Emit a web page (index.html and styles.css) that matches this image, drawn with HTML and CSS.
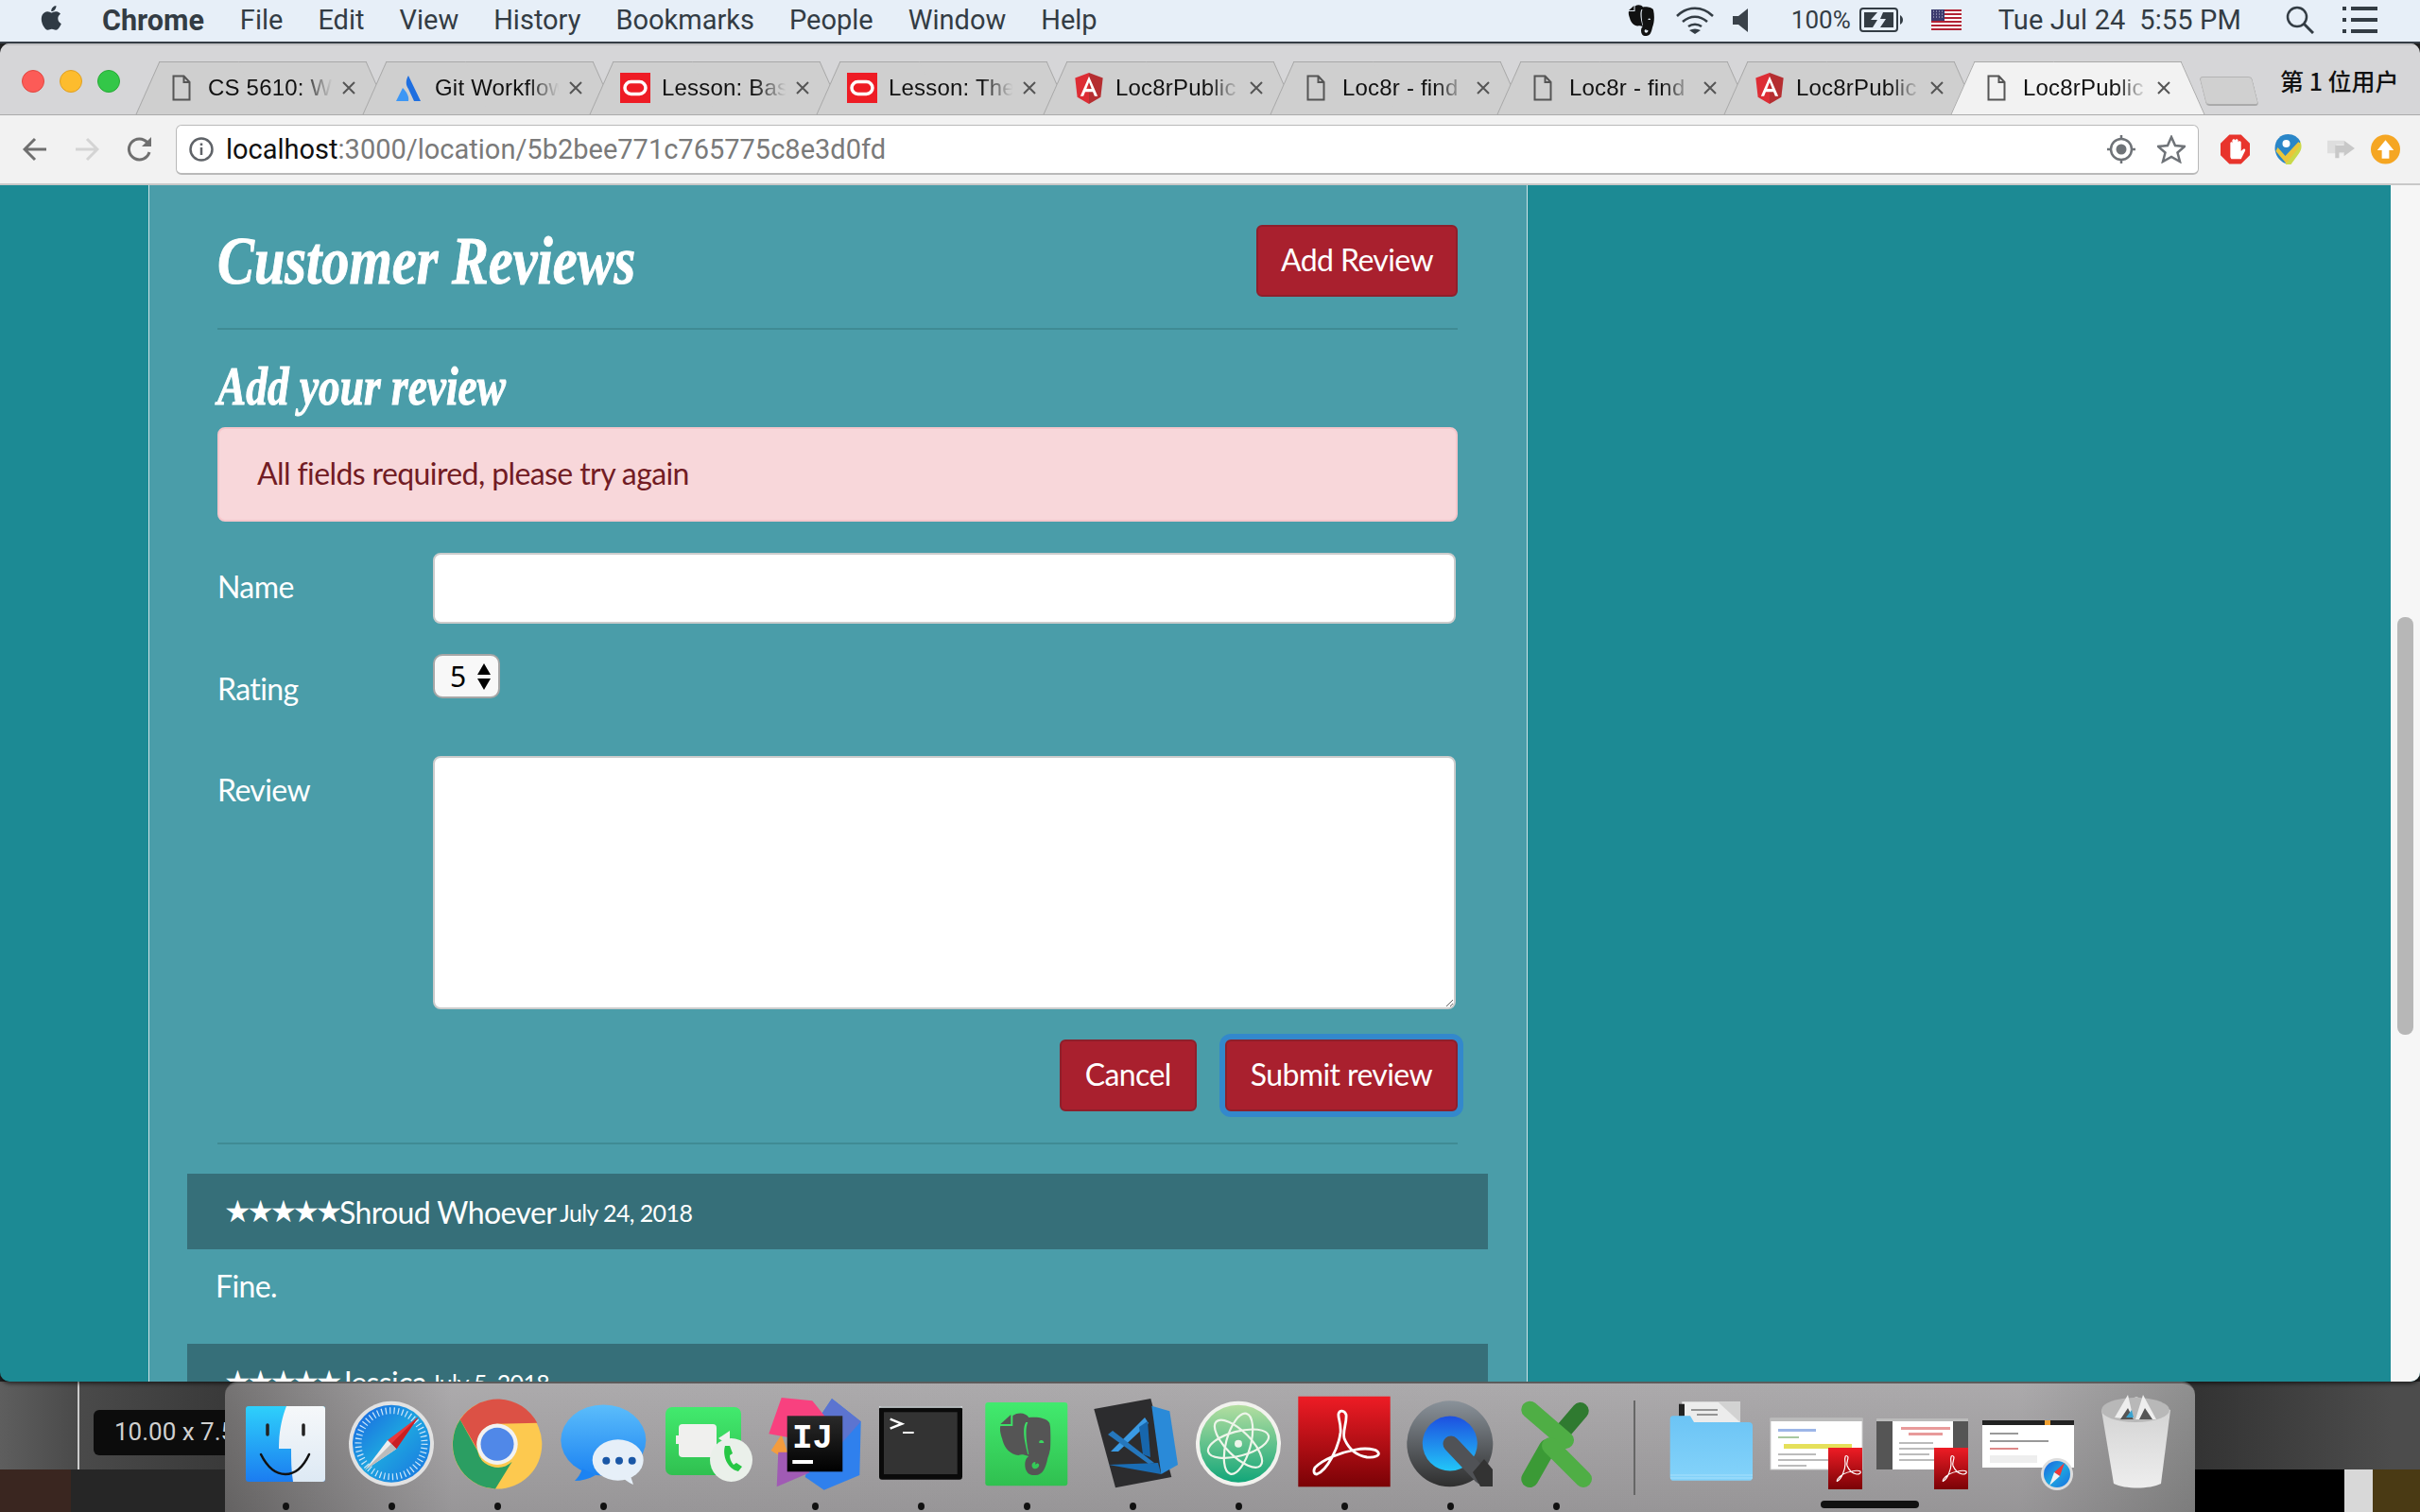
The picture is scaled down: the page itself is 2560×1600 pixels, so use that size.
FILE: index.html
```html
<!DOCTYPE html>
<html lang="en">
    <head>
        <meta charset="UTF-8" />
        <title>Loc8rPublic</title>
        <link rel="stylesheet" href="styles.css">
    </head>
    <body>
        <svg class="defs" width="0" height="0">
            <defs>
                <symbol id="doc" viewBox="0 0 20 28"><path d="M1.5 1.5h11l6 6.500v18.500h-17z M12.500 1.500v6.500h6" fill="#fff" fill-opacity="0" stroke="#555" stroke-width="2"/></symbol>
                <symbol id="oracle" viewBox="0 0 32 32"><rect width="32" height="32" fill="#ee1c25"/><rect x="5" y="9.500" width="22" height="13" rx="6.500" fill="none" stroke="#fff" stroke-width="3.500"/></symbol>
                <symbol id="angular" viewBox="0 0 32 36"><path d="M16 0L0 6l2.500 22L16 36z" fill="#dd2d35"/><path d="M16 0l16 6-2.500 22L16 36z" fill="#b52e31"/><path d="M16 4L6 27h3.600l2-5h8.800l2 5H26zM13 18.500l3-7.500 3 7.500z" fill="#fff"/></symbol>
                <symbol id="atlassian" viewBox="0 0 26 27"><path d="M13 0c-3 5-3 10 0 14l6 13h7z" fill="#1f6fe0"/><path d="M7 13L0 27h13c1-5-2-10-6-14z" fill="#3d97f5"/></symbol>
                <symbol id="close" viewBox="0 0 14 14"><path d="M1 1l12 12M13 1L1 13" stroke="#555" stroke-width="2" fill="none"/></symbol>
                <symbol id="elephant" viewBox="0 0 54 66"><path fill-rule="evenodd" d="M14 3C20-1 28 0 31 5c8-1 19 0 22 6 3 13 2 27-2 37-2 10-5 18-13 18-7 1-11-4-11-11 0-5 2-8 4-9-6-2-8-2-11-1-8-1-15-7-17-17-2-6-3-10-2-14h13zM38 52c-4 0-5 5-2 7 3 1 6-1 6-4-1-2-2-2-4 0zM42 30c2-2 5-1 5 2h-5zM28 10c-4 6-2 20 2 34h1c-3-14-4-28-1-34z"/><path d="M1 12L12 2v10z"/></symbol>
                <linearGradient id="g-finder" x1="0" y1="0" x2="0" y2="1"><stop offset="0" stop-color="#2ed0fb"/><stop offset="1" stop-color="#1b7cf0"/></linearGradient>
                <linearGradient id="g-finder2" x1="0" y1="0" x2="0" y2="1"><stop offset="0" stop-color="#f6f8fa"/><stop offset="1" stop-color="#dde9f4"/></linearGradient>
                <linearGradient id="g-acro" x1="0" y1="0" x2="0" y2="1"><stop offset="0" stop-color="#ee1c25"/><stop offset="1" stop-color="#7a0206"/></linearGradient>
                <linearGradient id="g-blue" x1="0" y1="0" x2="0" y2="1"><stop offset="0" stop-color="#5bbdfb"/><stop offset="1" stop-color="#1c83f2"/></linearGradient>
                <linearGradient id="g-safari" x1="0" y1="0" x2="1" y2="1"><stop offset="0" stop-color="#1a5fe0"/><stop offset=".5" stop-color="#1ea6e0"/><stop offset="1" stop-color="#1a70e0"/></linearGradient>
                <linearGradient id="g-green" x1="0" y1="0" x2="0" y2="1"><stop offset="0" stop-color="#42ea6e"/><stop offset="1" stop-color="#30c050"/></linearGradient>
                <linearGradient id="g-atom" x1="0" y1="0" x2="0" y2="1"><stop offset="0" stop-color="#b4dea0"/><stop offset="1" stop-color="#12a679"/></linearGradient>
                <linearGradient id="g-qt" x1="0" y1="0" x2="0" y2="1"><stop offset="0" stop-color="#1d4fe0"/><stop offset="1" stop-color="#22c6f8"/></linearGradient>
                <linearGradient id="g-qtring" x1="0" y1="0" x2="0" y2="1"><stop offset="0" stop-color="#8a929a"/><stop offset="1" stop-color="#2e2e2e"/></linearGradient>
                <linearGradient id="g-folder" x1="0" y1="0" x2="0" y2="1"><stop offset="0" stop-color="#6cc4f5"/><stop offset="1" stop-color="#84d3fa"/></linearGradient>
                <linearGradient id="g-trash" x1="0" y1="0" x2="0" y2="1"><stop offset="0" stop-color="#cfcfcf"/><stop offset="1" stop-color="#eeeeee"/></linearGradient>
                <linearGradient id="g-ij" x1="0" y1="0" x2="0" y2="1"><stop offset="0" stop-color="#2a2a2a"/><stop offset="1" stop-color="#000"/></linearGradient>
                <symbol id="acro-mini" viewBox="0 0 36 44"><rect width="36" height="44" fill="url(#g-acro)"/><path d="M10 35c4-2 8-12 8-18 0-3-1-5 0-7 0-2 2-2 3 0 0 3-2 6-1 9 2 5 5 8 10 9 3 0 5-1 4-3-1-1-6-1-9 0-6 1-12 4-15 8-1 2-1 3 0 2z" fill="none" stroke="#fff" stroke-width="1.200"/></symbol>
            </defs>
        </svg>

        <header class="menubar">
            <div class="menu-left">
                <svg class="apple" viewBox="0 0 24 24"><path fill="#2f3a44" d="M17.05 12.54c-.03-2.6 2.12-3.85 2.22-3.91-1.21-1.77-3.09-2.01-3.76-2.04-1.6-.16-3.12.94-3.93.94-.81 0-2.07-.92-3.4-.89-1.75.03-3.36 1.02-4.26 2.58-1.82 3.15-.47 7.82 1.3 10.38.87 1.25 1.9 2.65 3.26 2.6 1.31-.05 1.8-.85 3.38-.85 1.58 0 2.02.85 3.4.82 1.4-.02 2.29-1.27 3.15-2.53.99-1.45 1.4-2.85 1.43-2.93-.03-.01-2.74-1.05-2.79-4.17zM14.46 4.9c.72-.87 1.2-2.08 1.07-3.29-1.03.04-2.29.69-3.03 1.56-.67.77-1.25 2-1.09 3.18 1.15.09 2.33-.58 3.05-1.45z"/></svg>
                <span class="menu-app">Chrome</span>
                <span>File</span>
                <span>Edit</span>
                <span>View</span>
                <span>History</span>
                <span>Bookmarks</span>
                <span>People</span>
                <span>Window</span>
                <span>Help</span>
            </div>
            <div class="menu-right">
                <svg class="st-ever"><use href="#elephant"/></svg>
                <svg class="st-wifi" viewBox="0 0 42 30"><path d="M2 11c11-11 27-11 38 0M8 17c8-7 18-7 26 0M14 22c4-3 10-3 14 0" fill="none" stroke="#333c44" stroke-width="2.500"/><path d="M15 26c4-2 8-2 12 0l-6 4z" fill="#333c44"/></svg>
                <svg class="st-vol" viewBox="0 0 16 25"><path d="M0 8h6L16 0v25L6 17H0z" fill="#3a424a"/></svg>
                <span class="st-pct">100%</span>
                <svg class="st-batt" viewBox="0 0 46 26"><rect x="1" y="1" width="39" height="24" rx="3" fill="none" stroke="#333c44" stroke-width="2"/><path d="M43 8c2 1 3 3 3 5s-1 4-3 5z" fill="#333c44"/><path d="M5 5h14l-7 8h7l-5 8H5zM25 5h11v16H22l6-9h-6z" fill="#333c44"/></svg>
                <svg class="st-flag" viewBox="0 0 32 22"><rect width="32" height="22" fill="#fff"/><path d="M0 0h32v2H0zM0 4h32v2H0zM0 8h32v2H0zM0 12h32v2H0zM0 16h32v2H0zM0 20h32v2H0z" fill="#b22234"/><rect width="14" height="12" fill="#3c3b6e"/><path d="M2 2h10M2 5h10M2 8h10" stroke="#ccd" stroke-dasharray="1 2"/></svg>
                <span class="st-date">Tue Jul 24&nbsp; 5:55 PM</span>
                <svg class="st-search" viewBox="0 0 30 30"><circle cx="12" cy="12" r="10" fill="none" stroke="#333c44" stroke-width="2.500"/><path d="M19 19l10 10" stroke="#333c44" stroke-width="3"/></svg>
                <svg class="st-list" viewBox="0 0 37 28"><path d="M0 2h4M9 2h28M0 14h4M9 14h28M0 26h4M9 26h28" stroke="#333c44" stroke-width="4"/></svg>
            </div>
        </header>

        <div class="browser">
            <div class="tabstrip">
                <div class="lights">
                    <span class="light light-red"></span>
                    <span class="light light-yellow"></span>
                    <span class="light light-green"></span>
                </div>
                <div class="tabs">
                    <div class="tab"><span class="fav"><svg class="fav-doc"><use href="#doc"/></svg></span><span class="tab-title">CS 5610: W</span><svg class="tab-x"><use href="#close"/></svg></div>
                    <div class="tab"><span class="fav"><svg class="fav-atl"><use href="#atlassian"/></svg></span><span class="tab-title">Git Workflow</span><svg class="tab-x"><use href="#close"/></svg></div>
                    <div class="tab"><span class="fav"><svg class="fav-full"><use href="#oracle"/></svg></span><span class="tab-title">Lesson: Bas</span><svg class="tab-x"><use href="#close"/></svg></div>
                    <div class="tab"><span class="fav"><svg class="fav-full"><use href="#oracle"/></svg></span><span class="tab-title">Lesson: The</span><svg class="tab-x"><use href="#close"/></svg></div>
                    <div class="tab"><span class="fav"><svg class="fav-ang"><use href="#angular"/></svg></span><span class="tab-title">Loc8rPublic</span><svg class="tab-x"><use href="#close"/></svg></div>
                    <div class="tab"><span class="fav"><svg class="fav-doc"><use href="#doc"/></svg></span><span class="tab-title">Loc8r - find</span><svg class="tab-x"><use href="#close"/></svg></div>
                    <div class="tab"><span class="fav"><svg class="fav-doc"><use href="#doc"/></svg></span><span class="tab-title">Loc8r - find</span><svg class="tab-x"><use href="#close"/></svg></div>
                    <div class="tab"><span class="fav"><svg class="fav-ang"><use href="#angular"/></svg></span><span class="tab-title">Loc8rPublic</span><svg class="tab-x"><use href="#close"/></svg></div>
                    <div class="tab tab-active"><span class="fav"><svg class="fav-doc"><use href="#doc"/></svg></span><span class="tab-title">Loc8rPublic</span><svg class="tab-x"><use href="#close"/></svg></div>
                    <div class="tab-new"></div>
                </div>
                <div class="profile">第 1 位用户</div>
            </div>

            <div class="toolbar">
                <svg class="nav-back" viewBox="0 0 26 26"><path d="M25 13H3M13 2L2 13l11 11" fill="none" stroke="#6f6f6f" stroke-width="3"/></svg>
                <svg class="nav-fwd" viewBox="0 0 26 26"><path d="M1 13h22M13 2l11 11-11 11" fill="none" stroke="#d4d4d4" stroke-width="3"/></svg>
                <svg class="nav-reload" viewBox="0 0 28 28"><path d="M24 17a11 11 0 1 1-2-10" fill="none" stroke="#6f6f6f" stroke-width="3"/><path d="M26 1v10H16z" fill="#6f6f6f"/></svg>
                <div class="omnibox">
                    <svg class="omni-info" viewBox="0 0 26 26"><circle cx="13" cy="13" r="11.500" fill="none" stroke="#5f6368" stroke-width="2.500"/><path d="M13 11v8M13 6.500v2.500" stroke="#5f6368" stroke-width="2.500"/></svg>
                    <span class="url"><span class="url-host">localhost</span>:3000/location/5b2bee771c765775c8e3d0fd</span>
                    <svg class="omni-target" viewBox="0 0 30 30"><circle cx="15" cy="15" r="11" fill="none" stroke="#6f7378" stroke-width="2.500"/><circle cx="15" cy="15" r="5.500" fill="#6f7378"/><path d="M15 0v4M15 26v4M0 15h4M26 15h4" stroke="#6f7378" stroke-width="2.500"/></svg>
                    <svg class="omni-star" viewBox="0 0 30 30"><path d="M15 2l4 9 10 1-7.500 6.500L24 28l-9-5-9 5 2.500-9.500L1 12l10-1z" fill="none" stroke="#6f7378" stroke-width="2.500"/></svg>
                </div>
                <div class="extensions">
                    <svg viewBox="0 0 30 30"><path d="M9 0h12l9 9v12l-9 9H9l-9-9V9z" fill="#e8342c"/><path d="M10 23V9c0-2 2-2 2 0V6c0-2 3-2 3 0 0-2 3-2 3 0v2c0-2 3-2 3 0v9l2-2c2-1 3 0 2 2l-4 8H11z" fill="#fff"/></svg>
                    <svg viewBox="0 0 30 32"><path d="M15 0a15 15 0 0 1 13 8L12 31C5 28 1 21 1 15 1 6 7 0 15 0z" fill="#2a86c8"/><path d="M28 8c2 5 1 9-2 13l-8 11h-6z" fill="#c9d94a"/><path d="M4 14l8 9L26 8l2 4-15 19L2 18z" fill="#e9c53a"/><circle cx="13" cy="10" r="4" fill="#fff"/></svg>
                    <svg viewBox="0 0 30 30"><path d="M1 6h17v4h-8v5h8v4H1z" fill="#dedede"/><path d="M18 11V6l11 8-11 8v-4h-5v6H9V11z" fill="#c8c8c8"/></svg>
                    <svg class="ext-up" viewBox="0 0 32 32"><circle cx="16" cy="16" r="16" fill="#f5a623"/><path d="M16 6l9 11h-5v9h-8v-9H7z" fill="#fff"/></svg>
                </div>
            </div>

            <div class="viewport">
                <main class="panel">
                    <div class="page-header">
                        <h2 class="script-head">Customer Reviews</h2>
                        <a class="btn">Add Review</a>
                    </div>
                    <hr class="rule">
                    <h4 class="script-sub">Add your review</h4>
                    <div class="alert">All fields required, please try again</div>
                    <form class="review-form">
                        <div class="form-row row-name">
                            <label>Name</label>
                            <input class="field" type="text">
                        </div>
                        <div class="form-row row-rating">
                            <label>Rating</label>
                            <div class="rating-select">
                                <span>5</span>
                                <svg viewBox="0 0 14 28"><path d="M7 0l7 12H0zM7 28L0 16h14z"/></svg>
                            </div>
                        </div>
                        <div class="form-row row-review">
                            <label>Review</label>
                            <textarea class="field field-area"></textarea>
                        </div>
                        <div class="form-actions">
                            <a class="btn">Cancel</a>
                            <a class="btn btn-focus">Submit review</a>
                        </div>
                    </form>
                    <hr class="rule rule-low">
                    <div class="review-head"><span class="stars">★★★★★</span><span class="review-name">Shroud Whoever</span> <small class="review-date">July 24, 2018</small></div>
                    <p class="review-body">Fine.</p>
                    <div class="review-head"><span class="stars">★★★★★</span><span class="review-name">Jessica</span> <small class="review-date">July 5, 2018</small></div>
                </main>
                <div class="scrollbar"><div class="scroll-thumb"></div></div>
            </div>
        </div>

        <div class="desktop">
            <div class="back-window">
                <div class="back-tool">
                    <div class="back-tip">10.00 x 7.50</div>
                </div>
            </div>
            <div class="wallpaper">
                <div class="wood"></div>
                <div class="wall-dark"></div>
                <div class="wall-black"></div>
                <div class="wall-light"></div>
                <div class="wood wood-r"></div>
            </div>
        </div>

        <nav class="dock">
            <div class="dock-item running">
                <svg viewBox="0 0 112 112"><rect x="14" y="16" width="84" height="80" rx="3" fill="url(#g-finder)"/><path d="M57 16h38a3 3 0 0 1 3 3v74a3 3 0 0 1-3 3H64c-2-12-2-24-2-35H49c0-18 3-32 8-45z" fill="url(#g-finder2)"/><path d="M37 36v10M75 36v10" stroke="#222" stroke-width="3.500" stroke-linecap="round"/><path d="M30 67c14 28 38 28 51 0" fill="none" stroke="#111" stroke-width="2.500" stroke-linecap="round"/></svg>
            </div>
            <div class="dock-item running">
                <svg viewBox="0 0 112 112"><circle cx="56" cy="55.700" r="45" fill="#e2e2e2"/><circle cx="56" cy="55.700" r="41" fill="url(#g-safari)"/><circle cx="56" cy="55.700" r="35" fill="none" stroke="#cfe8fa" stroke-width="7" stroke-dasharray="1.200 3.200"/><path d="M84.700 27.300L52 52l9.300 9.300z" fill="#e8383b"/><path d="M28 83.700L52 52l9.300 9.300z" fill="#ededed"/><path d="M84.700 27.300L56 55.700 61.300 61.300z" fill="#c81f22"/><path d="M28 83.700L56 55.700 61.300 61.300z" fill="#bbb"/></svg>
            </div>
            <div class="dock-item running">
                <svg viewBox="0 0 112 112"><circle cx="56" cy="56.300" r="47.300" fill="#fdc94f"/><path d="M16.700 30.300A47.300 47.300 0 0 1 98.300 33.700L56 34.700a22 22 0 0 0-21 27z" fill="#dc5145"/><path d="M16.700 30.300L35 63a22 22 0 0 0 36.700 11.700L54 103.500A47.300 47.300 0 0 1 16.700 30.300z" fill="#2b9e62"/><circle cx="56" cy="56.300" r="21.700" fill="#f2f2f2"/><circle cx="56" cy="56.300" r="17.500" fill="#5088e8"/></svg>
            </div>
            <div class="dock-item running">
                <svg viewBox="0 0 112 112"><ellipse cx="56.300" cy="52" rx="45" ry="37.500" fill="url(#g-blue)"/><path d="M34 82c-2 6-5 10-8 13 7 0 15-2 22-6z" fill="#1c83f2"/><ellipse cx="71.700" cy="73" rx="27" ry="21.700" fill="#e6eff8"/><path d="M78 93c4 3 7 5 10 6l-3-9z" fill="#e6eff8"/><g fill="#1a57a6"><circle cx="59.300" cy="73.700" r="4"/><circle cx="73" cy="73.700" r="4"/><circle cx="86.700" cy="73.700" r="4"/></g></svg>
            </div>
            <div class="dock-item">
                <svg viewBox="0 0 112 112"><rect x="10" y="17" width="80" height="72" rx="7" fill="url(#g-green)"/><rect x="24" y="35" width="40" height="35" rx="4" fill="#f0f0ee"/><rect x="21" y="47" width="4" height="9" fill="#f0f0ee"/><path d="M66 50l12-8v16z" fill="#f0f0ee"/><ellipse cx="79.500" cy="73" rx="22.500" ry="23" fill="#eaf0ea"/><path d="M73 58c-3 10 2 24 14 27l4-5-6-4-3 2c-3-3-4-7-4-10l3-2-3-8z" fill="#26c744"/></svg>
            </div>
            <div class="dock-item running">
                <svg viewBox="0 0 112 112"><path d="M74 8l30.700 24.300-1.400 56.700-37.600 15.700-20-13.700L64 23z" fill="#2f80ed"/><path d="M74 8l30.700 24.300L80 60 64 23z" fill="#5c74d0"/><path d="M9.700 63L20.700 46l10 30z" fill="#f39c3d"/><path d="M17.300 64.700l-1.600 36.600 35-15L30 64.700z" fill="#a05bb4"/><path d="M20.700 7l32.600 3.300L69 29.700 50 53 7.300 45.300z" fill="#f8417f"/><rect x="26.700" y="26.300" width="58.600" height="59" fill="url(#g-ij)"/><text x="32" y="60" class="ij-text">IJ</text><rect x="32.300" y="73" width="21.700" height="4" fill="#fff"/></svg>
            </div>
            <div class="dock-item running">
                <svg viewBox="0 0 112 112"><rect x="12" y="16.300" width="88" height="77.400" rx="3" fill="#0a0a0a"/><path d="M12 17h88" stroke="#dfe6e8" stroke-width="1.500"/><rect x="17" y="22.300" width="77.700" height="65.700" fill="#333"/><path d="M23.700 29.700l12.300 5-12.300 5" fill="none" stroke="#fff" stroke-width="2.500"/><rect x="37" y="43" width="11.700" height="2" fill="#fff"/></svg>
            </div>
            <div class="dock-item running">
                <svg viewBox="0 0 112 112"><rect x="12.300" y="12" width="87" height="88.300" rx="3" fill="url(#g-green)"/><svg x="27.300" y="23" width="54" height="66" fill="#555"><use href="#elephant"/></svg></svg>
            </div>
            <div class="dock-item running">
                <svg viewBox="0 0 112 112"><path d="M15.300 19L75.300 8l22 83-59.300 11.300z" fill="#2c2c2e"/><path d="M76.300 15.700l19 5.600L104 78 86.300 88z" fill="#2a8ad8"/><path d="M30.700 78l55.600 10L83 76z" fill="#1a6db5"/><path d="M69 28L33 64l8 0L73 34z" fill="#3a9ae4"/><path d="M30 46l5-4 44 34-6 1z" fill="#2577bd"/><path d="M63 38l9-6 3 38-8-3z" fill="#1766ac"/></svg>
            </div>
            <div class="dock-item running">
                <svg viewBox="0 0 112 112"><circle cx="56" cy="55.700" r="45" fill="#f2f2ee"/><circle cx="56" cy="55.700" r="41" fill="url(#g-atom)"/><g fill="none" stroke="#eef5ea" stroke-width="2.200"><ellipse cx="56" cy="55.700" rx="13" ry="33" transform="rotate(15 56 55.700)"/><ellipse cx="56" cy="55.700" rx="13" ry="33" transform="rotate(75 56 55.700)"/><ellipse cx="56" cy="55.700" rx="13" ry="33" transform="rotate(-45 56 55.700)"/></g><circle cx="56" cy="55.700" r="4" fill="#eef5ea"/></svg>
            </div>
            <div class="dock-item running">
                <svg viewBox="0 0 112 112"><rect x="7.300" y="5.700" width="97.400" height="95.600" fill="url(#g-acro)"/><path d="M27 88C38 84 50 60 52 44c1-10-3-16-2-20 1-4 6-4 8 1 1 9-4 17-2 25 4 10 12 18 24 20 8 1 14-2 12-5-2-4-14-5-24-3-16 3-34 10-43 19-2 4-1 7 2 7z" fill="none" stroke="#fff" stroke-width="2.800"/></svg>
            </div>
            <div class="dock-item running">
                <svg viewBox="0 0 112 112"><circle cx="55.800" cy="55.800" r="45.500" fill="url(#g-qtring)"/><circle cx="55.800" cy="55.500" r="29" fill="url(#g-qt)"/><path d="M57 56l32 34" stroke="#505256" stroke-width="17" stroke-linecap="round"/><path d="M80 86l12-14 9 11v18H88z" fill="#333"/></svg>
            </div>
            <div class="dock-item running">
                <svg viewBox="0 0 112 112"><path d="M81.700 21L62 44" stroke="#2f7a30" stroke-width="18" stroke-linecap="round"/><path d="M28.300 19.700L66 52" stroke="#4fae45" stroke-width="18" stroke-linecap="round"/><path d="M47 60L28.300 93" stroke="#3b9a36" stroke-width="18" stroke-linecap="round"/><path d="M50 58l35 35" stroke="#4fae45" stroke-width="18" stroke-linecap="round"/></svg>
            </div>
            <div class="dock-sep"></div>
            <div class="dock-item">
                <svg viewBox="0 0 112 112"><rect x="24.300" y="11.300" width="61.700" height="24" fill="#ececec"/><path d="M62 11.300h24v22z" fill="#d2d2d2"/><path d="M34 20h28M40 25h22" stroke="#777" stroke-width="1.500"/><rect x="21" y="13.700" width="6" height="13" fill="#222"/><path d="M11.700 30c0-2 1-3.700 3-3.700H33l4 6.700h58c2.500 0 4 1.500 4 4v54c0 2-1 3.700-3 3.700H14.700c-2 0-3-1.700-3-3.700z" fill="url(#g-folder)"/><path d="M12 89h87M12 92h87" stroke="#a8e0fb" stroke-width="1"/></svg>
            </div>
            <div class="dock-item dock-stack">
                <svg viewBox="0 0 112 112"><rect x="6" y="29" width="97" height="54" fill="#fff" stroke="#ccc"/><rect x="6" y="29" width="97" height="3" fill="#bbb"/><rect x="14" y="40" width="40" height="3" fill="#9db6e8"/><rect x="14" y="48" width="22" height="2" fill="#a8c8a0"/><rect x="20" y="56" width="72" height="5" fill="#e5e05a"/><rect x="14" y="66" width="40" height="2" fill="#bbb"/><rect x="14" y="72" width="56" height="2" fill="#bbb"/><rect x="14" y="78" width="30" height="2" fill="#bbb"/><svg x="67" y="60" width="36" height="44"><use href="#acro-mini"/></svg></svg>
            </div>
            <div class="dock-item dock-stack">
                <svg viewBox="0 0 112 112"><rect x="6" y="29" width="97" height="54" fill="#555"/><rect x="23" y="29" width="64" height="54" fill="#fff"/><rect x="6" y="29" width="97" height="3" fill="#bbb"/><rect x="32" y="38" width="52" height="3" fill="#e89a9a"/><rect x="40" y="44" width="36" height="3" fill="#e89a9a"/><rect x="30" y="54" width="36" height="2" fill="#bbb"/><rect x="30" y="60" width="50" height="2" fill="#bbb"/><rect x="30" y="66" width="32" height="2" fill="#bbb"/><rect x="30" y="72" width="44" height="2" fill="#bbb"/><svg x="67" y="60" width="36" height="44"><use href="#acro-mini"/></svg></svg>
            </div>
            <div class="dock-item dock-stack">
                <svg viewBox="0 0 112 112"><rect x="6" y="31" width="97" height="50" fill="#fff"/><rect x="6" y="31" width="97" height="5" fill="#222"/><rect x="72" y="31" width="6" height="5" fill="#f0a030"/><rect x="14" y="44" width="30" height="2" fill="#999"/><rect x="14" y="52" width="62" height="2" fill="#999"/><rect x="14" y="60" width="30" height="2" fill="#d88"/><rect x="14" y="68" width="50" height="8" fill="#eee"/><circle cx="85" cy="88" r="17" fill="#ddd"/><circle cx="85" cy="88" r="14" fill="url(#g-safari)"/><path d="M93 76l-11 10 6 4z" fill="#ee3a3a"/><path d="M77 100l11-10-6-4z" fill="#f2f2f2"/></svg>
            </div>
            <div class="dock-item">
                <svg viewBox="0 0 112 112"><path d="M20 20l37-14 36 14-10 78c-12 6-38 6-50 0z" fill="url(#g-trash)"/><ellipse cx="56" cy="20" rx="36" ry="13" fill="#b8b8b8"/><path d="M34 28l14-24 6 26zM56 30l8-26 14 26z" fill="#eee"/><path d="M40 30l8-12 6 12zM60 30l6-12 8 12z" fill="#555"/><path d="M46 28l6-8 2 8z" fill="#3aa3d0"/></svg>
            </div>
            <div class="stack-pill"></div>
        </nav>
    </body>
</html>
```

FILE: styles.css
```css
* {
    box-sizing: border-box;
}
html,
body {
    margin: 0;
    padding: 0;
}
body {
    position: relative;
    width: 2560px;
    height: 1600px;
    overflow: hidden;
    display: flex;
    flex-direction: column;
    font-family: "Lato", "Noto Sans", sans-serif;
    background-color: #222;
}
.defs {
    position: absolute;
}

/* mac menu bar */
.menubar {
    height: 46px;
    flex: none;
    display: flex;
    justify-content: space-between;
    align-items: center;
    padding: 0 45px 2px 43px;
    background-color: #e7eff8;
    border-bottom: 2px solid #39414a;
    font-family: "Roboto", sans-serif;
    font-size: 29px;
    color: #333c44;
}
.menu-left,
.menu-right {
    display: flex;
    align-items: center;
}
.menu-left span {
    margin-right: 37px;
}
.apple {
    width: 30px;
    height: 34px;
    margin: -4px 38px 0 -3px;
}
.menu-left .menu-app {
    font-size: 30.500px;
    font-weight: 700;
    margin-right: 38px;
}
.st-ever {
    width: 30px;
    height: 33px;
    fill: #111;
    margin-right: 21px;
}
.st-wifi {
    width: 42px;
    height: 30px;
    margin-right: 19px;
}
.st-vol {
    width: 16px;
    height: 25px;
    margin-right: 46px;
}
.st-pct {
    font-size: 26px;
    margin-right: 9px;
}
.st-batt {
    width: 46px;
    height: 26px;
    margin-right: 30px;
}
.st-flag {
    width: 32px;
    height: 22px;
    margin-right: 39px;
}
.st-date {
    letter-spacing: 0.15px;
    margin-right: 47px;
}
.st-search {
    width: 30px;
    height: 30px;
    margin-right: 30px;
}
.st-list {
    width: 37px;
    height: 28px;
}

/* browser window */
.browser {
    height: 1416px;
    flex: none;
    display: flex;
    flex-direction: column;
    border-radius: 10px;
    overflow: hidden;
    box-shadow: 0 2px 4px rgba(0, 0, 0, 0.6);
    position: relative;
    z-index: 1;
}
.tabstrip {
    height: 75px;
    flex: none;
    display: flex;
    background-color: #d6d6d8;
    border-top: 2px solid #c2c2c4;
    position: relative;
}
.lights {
    width: 144px;
    flex: none;
    display: flex;
    gap: 16px;
    padding: 26px 0 0 23px;
}
.light {
    width: 24px;
    height: 24px;
    border-radius: 50%;
}
.light-red {
    background-color: #fc5b57;
    border: 1px solid #e2463f;
}
.light-yellow {
    background-color: #fdbc2e;
    border: 1px solid #dfa023;
}
.light-green {
    background-color: #33c748;
    border: 1px solid #27aa35;
}
.tabs {
    display: flex;
    align-items: flex-end;
    height: 73px;
    isolation: isolate;
}
.tab {
    width: 268px;
    height: 56px;
    margin-right: -28px;
    flex: none;
    display: flex;
    align-items: center;
    padding-left: 32px;
    position: relative;
    font-family: "Liberation Sans", sans-serif;
    font-size: 24px;
    letter-spacing: 0.2px;
    color: #111;
}
.tab::before,
.tab::after {
    content: "";
    position: absolute;
    top: 0;
    bottom: 0;
    width: 50%;
    background-color: #cfcfcf;
    border-top: 1px solid #a8a8a8;
    z-index: -1;
}
.tab::before {
    left: 12px;
    border-left: 1px solid #a8a8a8;
    transform: skewX(-24deg);
}
.tab::after {
    right: 12px;
    border-right: 1px solid #a8a8a8;
    transform: skewX(24deg);
}
.tab-active {
    z-index: 2;
}
.tab-active::before,
.tab-active::after {
    background-color: #f2f2f2;
}
.fav {
    width: 32px;
    height: 36px;
    flex: none;
    display: flex;
    justify-content: center;
    align-items: center;
}
.fav-doc {
    width: 20px;
    height: 28px;
}
.fav-atl {
    width: 26px;
    height: 27px;
}
.fav-full {
    width: 32px;
    height: 32px;
}
.fav-ang {
    width: 30px;
    height: 33px;
}
.tab-title {
    width: 140px;
    margin-left: 12px;
    white-space: nowrap;
    overflow: hidden;
    -webkit-mask-image: linear-gradient(to right, #000 70%, transparent 94%);
    mask-image: linear-gradient(to right, #000 70%, transparent 94%);
}
.tab-x {
    width: 14px;
    height: 14px;
    margin-left: 2px;
}
.tab-new {
    width: 56px;
    height: 31px;
    margin: 0 0 9px 26px;
    background-color: #d0d0d0;
    border: 1px solid #b4b4b4;
    border-bottom: 2px solid #aaa;
    border-radius: 4px;
    transform: skewX(14deg);
    flex: none;
}
.profile {
    position: absolute;
    left: 2412px;
    top: 21px;
    font-family: "Noto Sans CJK SC", sans-serif;
    font-size: 25px;
    font-weight: 500;
    line-height: 32px;
    color: #111;
}

.toolbar {
    height: 75px;
    flex: none;
    display: flex;
    align-items: center;
    padding: 0 20px 0 24px;
    background-color: #f2f2f2;
    border-top: 1px solid #aaa;
    border-bottom: 2px solid #c8c8c8;
}
.toolbar svg {
    flex: none;
}
.nav-back {
    width: 26px;
    height: 26px;
    margin-right: 29px;
}
.nav-fwd {
    width: 26px;
    height: 26px;
    margin-right: 29px;
}
.nav-reload {
    width: 28px;
    height: 28px;
    margin-right: 24px;
}
.omnibox {
    width: 2140px;
    height: 53px;
    flex: none;
    display: flex;
    align-items: center;
    padding: 0 13px;
    background-color: #fff;
    border: 1px solid #b9b9b9;
    border-bottom-width: 2px;
    border-radius: 6px;
}
.omni-info {
    width: 26px;
    height: 26px;
    margin-right: 13px;
}
.url {
    font-family: "Roboto", sans-serif;
    font-size: 29px;
    color: #7a7a7a;
    flex: 1;
}
.url-host {
    color: #111;
}
.omni-target {
    width: 30px;
    height: 30px;
    margin-right: 23px;
}
.omni-star {
    width: 30px;
    height: 30px;
}
.extensions {
    display: flex;
    align-items: center;
    gap: 25px;
    margin-left: 23px;
}
.extensions svg {
    width: 31px;
    height: 32px;
}
.extensions .ext-up {
    margin-left: -9px;
}

/* page */
.viewport {
    flex: 1;
    min-height: 0;
    display: flex;
    justify-content: space-between;
    overflow: hidden;
    background-color: #1c8a94;
}
.panel {
    width: 1459px;
    margin-left: 157px;
    flex: none;
    padding: 42px 73px 0 72px;
    background-color: #4a9da9;
    border-left: 1px solid #cfe3e6;
    border-right: 1px solid #cfe3e6;
    color: #fff;
    font-size: 32px;
    letter-spacing: -0.6px;
}
.page-header {
    display: flex;
    justify-content: space-between;
    align-items: center;
}
.script-head,
.script-sub {
    margin: 0;
    font-family: "Liberation Serif", serif;
    font-style: italic;
    font-weight: 700;
    letter-spacing: 0;
    transform-origin: left center;
    -webkit-text-stroke: 1px #fff;
}
.script-head {
    font-size: 72px;
    line-height: 76px;
    transform: scaleX(0.81);
}
.script-sub {
    font-size: 56px;
    line-height: 64px;
    margin-top: 28px;
    transform: scaleX(0.81);
}
.btn {
    display: inline-block;
    height: 76px;
    padding: 0 24px;
    line-height: 70px;
    background-color: #a9202e;
    border: 2px solid #8e1f2b;
    border-radius: 6px;
    color: #fff;
    font-size: 32px;
    white-space: nowrap;
}
.btn-focus {
    box-shadow: 0 0 0 6px #3388cc;
}
.rule {
    height: 2px;
    margin: 33px 0 0;
    border: 0;
    background-color: #3f8b94;
}
.alert {
    height: 100px;
    margin-top: 11px;
    padding-left: 40px;
    line-height: 94px;
    background-color: #f8d7da;
    border: 2px solid #f5c6cb;
    border-radius: 8px;
    color: #721c24;
}
.form-row {
    display: flex;
}
.form-row label {
    width: 228px;
    flex: none;
}
.row-name {
    margin-top: 33px;
    height: 75px;
    align-items: center;
}
.row-name label {
    padding-bottom: 4px;
}
.field {
    flex: 1;
    display: block;
    margin-right: 2px;
    background-color: #fff;
    border: 2px solid #ccc;
    border-radius: 8px;
    outline: 0;
}
.row-name .field {
    height: 75px;
}
.row-rating {
    margin-top: 32px;
    margin-bottom: 32px;
    height: 76px;
}
.row-rating label {
    padding-top: 17px;
}
.rating-select {
    width: 71px;
    height: 47px;
    display: flex;
    align-items: center;
    justify-content: space-between;
    padding: 0 8px 0 16px;
    background-color: #f8f8f8;
    border: 2px solid #a6a6a6;
    border-radius: 10px;
    color: #000;
    font-family: "Noto Sans", sans-serif;
    font-size: 30px;
}
.rating-select svg {
    width: 14px;
    height: 28px;
}
.row-review {
    height: 268px;
}
.row-review label {
    padding-top: 16px;
}
.field-area {
    height: 268px;
    resize: both;
}
.form-actions {
    display: flex;
    justify-content: flex-end;
    gap: 30px;
    margin-top: 32px;
}
.form-actions .btn {
    padding: 0 25px;
}
.review-head {
    height: 80px;
    margin: 31px -32px 0;
    padding-left: 40px;
    display: flex;
    align-items: center;
    background-color: #366f79;
    white-space: pre;
}
.stars {
    font-family: "DejaVu Sans", sans-serif;
    font-size: 32px;
    letter-spacing: -4.500px;
    margin-left: -1px;
    margin-right: 1px;
}
.review-date {
    font-size: 25px;
    margin-left: 4px;
    padding-top: 2px;
}
.review-body {
    height: 100px;
    margin: 0 0 0 -2px;
    line-height: 78px;
}
.review-body + .review-head {
    margin-top: 0;
}
.scrollbar {
    width: 31px;
    flex: none;
    padding: 457px 7px 0;
    background-color: #f6f6f6;
}
.scroll-thumb {
    height: 442px;
    border-radius: 8px;
    background-color: #b7b7b7;
}

/* behind the window */
.desktop {
    flex: 1;
    display: flex;
    flex-direction: column;
}
.back-window {
    height: 93px;
    flex: none;
    background: linear-gradient(to right, #5e5e5e 0, #4a4a4a 82px, #333 300px, #333 2322px, #4c4c4c 2530px);
}
.back-tool {
    height: 100%;
    margin-left: 82px;
    padding: 30px 0 0 15px;
    border-left: 2px solid #ccc;
}
.back-tip {
    width: 200px;
    height: 48px;
    padding-left: 22px;
    line-height: 46px;
    background-color: #0c0c0c;
    border-radius: 6px;
    color: #d0d0d0;
    font-family: "Roboto", sans-serif;
    font-size: 26px;
}
.wallpaper {
    flex: 1;
    display: flex;
}
.wood {
    width: 75px;
    background-color: #3a2620;
}
.wood-r {
    width: 50px;
    background-color: #4a3a14;
}
.wall-dark {
    width: 2247px;
    background-color: #262626;
}
.wall-black {
    width: 158px;
    background-color: #000;
}
.wall-light {
    width: 30px;
    background-color: #d8d8d8;
}

/* dock */
.dock {
    position: absolute;
    left: 238px;
    top: 1462px;
    width: 2084px;
    height: 138px;
    z-index: 2;
    display: flex;
    padding: 8px 0 0 8px;
    background: linear-gradient(to bottom, rgba(255, 255, 255, 0.04), rgba(0, 0, 0, 0.1)), linear-gradient(to right, #6f6d6d 0, #a9a7a9 240px, #a8a6a8 1900px, #8a8a8a 2084px);
    border-top: 2px solid #5c5c5c;
    border-radius: 14px 14px 0 0;
}
.dock-item {
    width: 112px;
    height: 128px;
    flex: none;
    position: relative;
}
.dock-item > svg {
    display: block;
    width: 112px;
    height: 112px;
}
.running::after {
    content: "";
    position: absolute;
    left: 53px;
    top: 118px;
    width: 7px;
    height: 8px;
    border-radius: 50%;
    background-color: #111;
}
.dock-sep {
    width: 53px;
    flex: none;
    position: relative;
}
.dock-sep::after {
    content: "";
    position: absolute;
    left: 26px;
    top: 10px;
    width: 2px;
    height: 100px;
    background-color: #666;
}
.stack-pill {
    position: absolute;
    left: 1688px;
    top: 124px;
    width: 104px;
    height: 8px;
    border-radius: 4px;
    background-color: #111;
}
.ij-text {
    font-family: "Liberation Mono", monospace;
    font-size: 36px;
    font-weight: 700;
    fill: #fff;
    letter-spacing: 0;
}
```
